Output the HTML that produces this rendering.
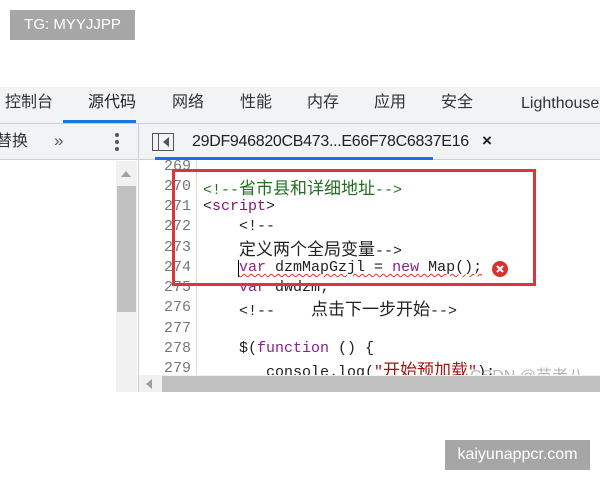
<!DOCTYPE html>
<html><head><meta charset="utf-8">
<style>
*{margin:0;padding:0;box-sizing:border-box}
body{width:600px;height:480px;background:#fff;position:relative;overflow:hidden;font-family:"Liberation Sans","Noto Sans CJK SC",sans-serif}
.abs{position:absolute}
.badge{background:#a6a6a6;color:#fff;font-size:15px;line-height:30px;text-align:center}
.tabbar{left:0;top:87px;width:600px;height:37px;background:#f1f3f4;border-bottom:1px solid #d0d0d0}
.tab{position:absolute;top:5px;font-size:16px;line-height:22px;color:#333}
.row2{left:0;top:124px;width:600px;height:36px;background:#f1f3f4;border-bottom:1px solid #d0d0d0}
.code{font-family:"Liberation Mono","Noto Sans CJK SC",monospace;font-size:15px;white-space:pre}
.cj{font-family:"Noto Sans CJK SC",sans-serif;font-size:17px;line-height:20px}
.ln{position:absolute;left:140px;width:51px;text-align:right;color:#777;font-family:"Liberation Mono",monospace;font-size:15px;line-height:20px}
.cl{position:absolute;left:203px;color:#222;line-height:20px;height:20px}
.g{color:#236e25}.p{color:#881280}.k{color:#8a1e8c}.s{color:#a11}
.wavy{text-decoration:underline wavy #d33;text-decoration-thickness:1px;text-underline-offset:2px}
</style></head><body>
<div class="abs badge" style="left:10px;top:10px;width:125px;height:30px">TG: MYYJJPP</div>

<div class="abs tabbar">
 <span class="tab" style="left:5px">控制台</span>
 <span class="tab" style="left:88px;color:#222">源代码</span>
 <span class="tab" style="left:172px">网络</span>
 <span class="tab" style="left:240px">性能</span>
 <span class="tab" style="left:307px">内存</span>
 <span class="tab" style="left:374px">应用</span>
 <span class="tab" style="left:441px">安全</span>
 <span class="tab" style="left:521px;top:6px">Lighthouse</span>
 <div class="abs" style="left:63px;top:33px;width:73px;height:3px;background:#1a73e8"></div>
</div>

<div class="abs row2">
 <span class="abs" style="left:-4px;top:7px;font-size:16px;line-height:22px;color:#333">替换</span>
 <span class="abs" style="left:54px;top:6px;font-size:17px;line-height:22px;color:#555">»</span>
 <div class="abs" style="left:115px;top:9px;width:4px;height:4px;border-radius:2px;background:#555"></div>
 <div class="abs" style="left:115px;top:16px;width:4px;height:4px;border-radius:2px;background:#555"></div>
 <div class="abs" style="left:115px;top:23px;width:4px;height:4px;border-radius:2px;background:#555"></div>
 <div class="abs" style="left:138px;top:0;width:1px;height:36px;background:#d0d0d0"></div>
 <svg class="abs" style="left:152px;top:9px" width="22" height="18"><rect x="0.5" y="0.5" width="21" height="17" fill="none" stroke="#555"/><line x1="6.5" y1="0" x2="6.5" y2="18" stroke="#555"/><path d="M17 4 L11 9 L17 14Z" fill="#555"/></svg>
 <span class="abs" style="left:192px;top:7px;font-size:16px;line-height:22px;letter-spacing:-0.3px;color:#222">29DF946820CB473...E66F78C6837E16</span>
 <span class="abs" style="left:482px;top:6px;font-size:17px;line-height:22px;color:#222;font-weight:bold">×</span>
 <div class="abs" style="left:155px;top:33px;width:278px;height:3px;background:#1a73e8"></div>
</div>

<div class="abs" style="left:116px;top:161px;width:21px;height:231px;background:#f1f1f1"></div>
<svg class="abs" style="left:121px;top:170px" width="10" height="8"><path d="M0 7 L5 1 L10 7Z" fill="#a0a0a0"/></svg>
<div class="abs" style="left:117px;top:186px;width:19px;height:126px;background:#c1c1c1"></div>
<div class="abs" style="left:138px;top:160px;width:1px;height:232px;background:#d0d0d0"></div>

<div class="abs" style="left:196px;top:160px;width:1px;height:215px;background:#ddd"></div>

<div class="abs code" style="left:0;top:157px;width:600px;height:218px;overflow:hidden">
 <div class="ln" style="top:0">269</div>
 <div class="ln" style="top:20px">270</div>
 <div class="ln" style="top:40px">271</div>
 <div class="ln" style="top:60px">272</div>
 <div class="ln" style="top:81px">273</div>
 <div class="ln" style="top:101px">274</div>
 <div class="ln" style="top:121px">275</div>
 <div class="ln" style="top:141px">276</div>
 <div class="ln" style="top:162px">277</div>
 <div class="ln" style="top:182px">278</div>
 <div class="ln" style="top:202px">279</div>
 <div class="cl g" style="top:20px">&lt;!--<span class="cj">省市县和详细地址</span>--&gt;</div>
 <div class="cl" style="top:40px">&lt;<span class="p">script</span>&gt;</div>
 <div class="cl" style="top:60px">    &lt;!--</div>
 <div class="cl" style="top:81px">    <span class="cj">定义两个全局变量</span>--&gt;</div>
 <div class="cl" style="top:101px">    <span class="wavy"><span class="k">var</span> dzmMapGzjl = <span class="k">new</span> Map();</span></div>
 <div class="abs" style="left:238px;top:103px;width:1px;height:17px;background:#000"></div>
 <svg class="abs" style="left:492px;top:104px" width="16" height="16"><circle cx="8" cy="8" r="8" fill="#d93030"/><path d="M5 5 L11 11 M11 5 L5 11" stroke="#fff" stroke-width="2"/></svg>
 <div class="cl" style="top:121px">    <span class="k">var</span> dwdzm;</div>
 <div class="cl" style="top:141px">    &lt;!--    <span class="cj">点击下一步开始</span>--&gt;</div>
 <div class="cl" style="top:182px">    $(<span class="k">function</span> () {</div>
 <div class="cl" style="top:202px">       console.log(<span class="s">"<span class="cj">开始预加载</span>"</span>);</div>
</div>

<div class="abs" style="left:172px;top:169px;width:364px;height:117px;border:3px solid #d9363e"></div>

<span class="abs" style="left:470px;top:362px;font-size:16px;color:rgba(120,120,120,0.55)">CSDN @苗老八</span>

<div class="abs" style="left:139px;top:375px;width:461px;height:17px;background:#f1f1f1"></div>
<svg class="abs" style="left:146px;top:379px" width="7" height="10"><path d="M6 0 L0 5 L6 10Z" fill="#a0a0a0"/></svg>
<div class="abs" style="left:162px;top:376px;width:438px;height:16px;background:#c1c1c1"></div>

<div class="abs badge" style="left:445px;top:440px;width:145px;height:30px;font-size:16px">kaiyunappcr.com</div>
</body></html>
